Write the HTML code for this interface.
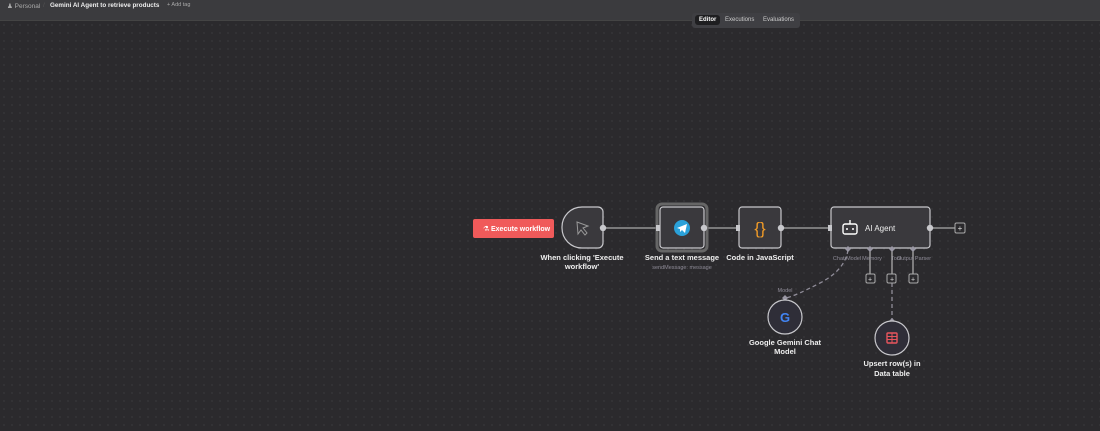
<!DOCTYPE html>
<html><head><style>
body{margin:0;width:1100px;height:431px;overflow:hidden;background:#2b2a2d;font-family:"Liberation Sans",sans-serif}
.hdr{position:absolute;left:0;top:0;width:1100px;height:20px;background:#3b3b3e;border-bottom:1px solid #444;font-size:6.5px;color:#bbb}
.canvas{position:absolute;left:0;top:21px;width:1100px;height:410px;background-color:#2b2a2d;background-image:radial-gradient(circle,#47464a 0.6px,transparent 0.8px);background-size:8px 8px}
svg{position:absolute;left:0;top:0}
</style></head><body>
<div class="canvas"></div>
<div class="hdr">
<span style="position:absolute;left:7px;top:2px;color:#aaa">&#9823; Personal</span>
<span style="position:absolute;left:43px;top:2px;color:#555">/</span>
<span style="position:absolute;left:50px;top:2px;color:#eee;font-weight:bold;font-size:6.3px">Gemini AI Agent to retrieve products</span>
<span style="position:absolute;left:167px;top:2px;color:#aaa;font-size:5.5px">+ Add tag</span>
</div>
<div style="position:absolute;left:692px;top:13px;width:108px;height:15px;background:#3f3f43;border-radius:3px;font-size:6px;color:#ccc">
<span style="position:absolute;left:3px;top:2px;padding:2px 4px;background:#1e1e20;border-radius:3px;color:#fff;font-weight:bold">Editor</span>
<span style="position:absolute;left:33px;top:4px">Executions</span>
<span style="position:absolute;left:71px;top:4px">Evaluations</span>
</div>
<svg width="1100" height="431" font-family="Liberation Sans, sans-serif">
<g stroke="#aaa" stroke-width="1.3" fill="none">
<line x1="603" y1="228" x2="657" y2="228"/>
<line x1="704" y1="228" x2="736" y2="228"/>
<line x1="781" y1="228" x2="828" y2="228"/>
<line x1="930" y1="228" x2="955" y2="228"/>
<line x1="870" y1="249" x2="870" y2="274"/>
<line x1="913" y1="249" x2="913" y2="274"/>
<line x1="892" y1="249" x2="892" y2="274"/>
</g>
<g stroke="#8f8c98" stroke-width="1.3" stroke-dasharray="4,3" fill="none">
<path d="M848 250 Q845 270 820 283 T786 298"/>
<line x1="892" y1="283" x2="892" y2="322"/>
</g>
<rect x="473" y="219" width="81" height="19" rx="2" fill="#f05a5a"/>
<text x="491" y="231" font-size="7" fill="#fff" font-weight="bold">Execute workflow</text>
<text x="483" y="231" font-size="7" fill="#fff">&#9879;</text>
<path d="M582 207 H598 a5 5 0 0 1 5 5 V243 a5 5 0 0 1 -5 5 H582 a20 20 0 0 1 -20 -20 V227 a20 20 0 0 1 20 -20z" fill="#3a393d" stroke="#c8c8cc" stroke-width="1.2"/>
<path d="M577 222 L588 226 L583 228 L587 233 L585 235 L581 230 L578 234 Z" fill="none" stroke="#999" stroke-width="1"/>
<rect x="657" y="204" width="50" height="47" rx="5" fill="none" stroke="#666" stroke-width="3"/>
<rect x="660" y="207" width="44" height="41" rx="3" fill="#3a393d" stroke="#c8c8cc" stroke-width="1.2"/>
<circle cx="682" cy="228" r="8" fill="#2aa1d9"/>
<path d="M677 228 L687 224 L685 233 L682 230 L680 232 L680 229 Z" fill="#fff"/>
<rect x="739" y="207" width="42" height="41" rx="3" fill="#3a393d" stroke="#c8c8cc" stroke-width="1.2"/>
<text x="760" y="234" font-size="17" fill="#f39c27" text-anchor="middle">{}</text>
<rect x="831" y="207" width="99" height="41" rx="3" fill="#3a393d" stroke="#c8c8cc" stroke-width="1.2"/>
<rect x="843" y="224" width="14" height="10" rx="2" fill="none" stroke="#fff" stroke-width="1.4"/>
<line x1="850" y1="220" x2="850" y2="224" stroke="#fff" stroke-width="1.4"/>
<circle cx="847" cy="229" r="1" fill="#fff"/><circle cx="853" cy="229" r="1" fill="#fff"/>
<text x="865" y="231" font-size="8" fill="#eee">AI Agent</text>
<g fill="#c8c8cc">
<circle cx="603" cy="228" r="3.2"/><circle cx="704" cy="228" r="3.2"/><circle cx="781" cy="228" r="3.2"/><circle cx="930" cy="228" r="3.2"/>
<rect x="656" y="225" width="4" height="6"/><rect x="736" y="225" width="4" height="6"/><rect x="828" y="225" width="4" height="6"/>
</g>
<g fill="#9a97a4">
<path d="M848 246 l3 3 -3 3 -3 -3z"/><path d="M870 246 l3 3 -3 3 -3 -3z"/><path d="M892 246 l3 3 -3 3 -3 -3z"/><path d="M913 246 l3 3 -3 3 -3 -3z"/>
<path d="M785 295 l3 3 -3 3 -3 -3z"/><path d="M892 318 l3 3 -3 3 -3 -3z"/>
</g>
<g fill="#2b2a2d" stroke="#aaa" stroke-width="1">
<rect x="955" y="223" width="10" height="10" rx="1.5"/>
<rect x="866" y="274" width="9" height="9" rx="1.5"/><rect x="887" y="274" width="9" height="9" rx="1.5"/><rect x="909" y="274" width="9" height="9" rx="1.5"/>
</g>
<g fill="#ddd" font-size="8" text-anchor="middle"><text x="960" y="231">+</text><text x="870" y="281.5" font-size="7">+</text><text x="892" y="281.5" font-size="7">+</text><text x="913" y="281.5" font-size="7">+</text></g>
<g font-size="5.5" fill="#8f8c98" text-anchor="middle"><text x="847" y="260">Chat Model</text><text x="872" y="260">Memory</text><text x="896" y="260">Tool</text><text x="914" y="260">Output Parser</text><text x="785" y="292">Model</text></g>
<circle cx="785" cy="317" r="17" fill="#2f2e38" stroke="#c8c8cc" stroke-width="1.2"/>
<text x="785" y="322" font-size="13" font-weight="bold" fill="#4285f4" text-anchor="middle">G</text>
<circle cx="892" cy="338" r="17" fill="#2f2e38" stroke="#c8c8cc" stroke-width="1.2"/>
<rect x="887" y="333" width="10" height="10" rx="1" fill="none" stroke="#e8555d" stroke-width="1.4"/>
<path d="M887 336.5H897M887 339.5H897M892 333V343" stroke="#e8555d" stroke-width="1"/>
<g font-size="7.5" font-weight="bold" fill="#eee" text-anchor="middle">
<text x="582" y="260">When clicking 'Execute</text><text x="582" y="269">workflow'</text>
<text x="682" y="260">Send a text message</text>
<text x="760" y="260">Code in JavaScript</text>
<text x="785" y="345">Google Gemini Chat</text><text x="785" y="354">Model</text>
<text x="892" y="366">Upsert row(s) in</text><text x="892" y="376">Data table</text>
</g>
<text x="682" y="269" font-size="5.5" fill="#8f8c98" text-anchor="middle">sendMessage: message</text>
</svg>
</body></html>
